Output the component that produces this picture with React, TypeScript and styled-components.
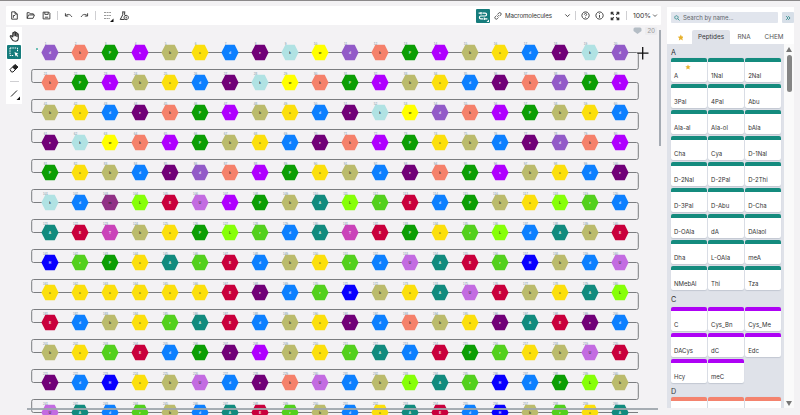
import React from 'react';
import styled, { createGlobalStyle } from 'styled-components';

const Global = createGlobalStyle`
  * { box-sizing: border-box; }
  body { margin: 0; background: #f3f2f4; overflow: hidden; }
  svg { display: block; }
`;

const Page = styled.div`
  width: 800px;
  height: 415px;
  overflow: hidden;
  display: grid;
  grid-template-columns: 661px 127px;
  column-gap: 6px;
  background: #f3f2f4;
  border-top: 1px solid #8b898a;
  font-family: Inter, 'Liberation Sans', sans-serif;
  color: #333;
`;

const Workspace = styled.main`
  display: flex;
  flex-direction: column;
  height: 414px;
`;

const TopBar = styled.header`
  margin: 5px 0 0 6px;
  height: 19px;
  flex: none;
  display: flex;
  align-items: center;
  background: #fff;
  border-radius: 1px;
`;

const Slot = styled.span<{ $w: number }>`
  width: ${(p) => p.$w}px;
  flex: none;
  display: flex;
  justify-content: center;
  align-items: center;
`;

const Divider = styled.i<{ $horizontal?: boolean }>`
  width: ${(p) => (p.$horizontal ? 9 : 1)}px;
  height: ${(p) => (p.$horizontal ? 1 : 9)}px;
  background: #cfcfd2;
`;

const Spacer = styled.div`
  flex: 1;
`;

const ModeButton = styled.button`
  width: 14px;
  height: 14px;
  padding: 0;
  border: 0;
  border-radius: 1px;
  background: #167c7c;
  display: flex;
  align-items: center;
  justify-content: center;
`;

const ModeName = styled.span`
  width: 57px;
  font-size: 6.2px;
  line-height: 10px;
  letter-spacing: -0.1px;
`;

const Zoom = styled.span`
  width: 19px;
  font-size: 6.8px;
  line-height: 10px;
`;

const Body = styled.div`
  display: flex;
  flex: 1;
  margin-top: 2px;
  min-height: 0;
`;

const ToolRail = styled.aside`
  width: 16px;
  height: 77px;
  margin-left: 6px;
  flex: none;
  background: #fff;
  display: flex;
  flex-direction: column;
  align-items: center;
`;

const Tool = styled.span<{ $h: number; $active?: boolean }>`
  width: 14px;
  height: ${(p) => p.$h}px;
  flex: none;
  display: flex;
  align-items: center;
  justify-content: center;
  border-radius: 1px;
  background: ${(p) => (p.$active ? '#167c7c' : 'transparent')};
`;

const Canvas = styled.svg`
  width: 639px;
  height: 388px;
  flex: none;
  font-family: 'Liberation Sans', sans-serif;
`;

const Library = styled.aside`
  margin-top: 6px;
  height: 401px;
  background: #fff;
  display: flex;
  flex-direction: column;
`;

const SearchRow = styled.div`
  margin: 5px 0 0 4px;
  height: 11px;
  flex: none;
  display: flex;
  justify-content: space-between;
`;

const SearchBox = styled.div`
  width: 107px;
  display: flex;
  align-items: center;
  gap: 3px;
  padding-left: 3px;
  border-radius: 1px;
  background: #e1e5ed;
  color: #62656b;
  font-size: 6px;
  letter-spacing: -0.03px;
  line-height: 11px;
`;

const Collapse = styled.div`
  width: 12px;
  display: flex;
  align-items: center;
  justify-content: center;
  border-radius: 1px;
  background: #d7dfe8;
`;

const Tabs = styled.nav`
  margin-top: 7px;
  height: 14px;
  flex: none;
  display: flex;
`;

const Tab = styled.span<{ $w: number; $active?: boolean }>`
  width: ${(p) => p.$w}px;
  display: flex;
  align-items: center;
  justify-content: center;
  font-size: 6.3px;
  border-radius: 2px 2px 0 0;
  color: ${(p) => (p.$active ? '#333' : '#555')};
  background: ${(p) => (p.$active ? '#dfe2e9' : 'transparent')};
`;

const Scroller = styled.div`
  flex: 1;
  min-height: 0;
  display: flex;
`;

const Monomers = styled.div`
  width: 117px;
  padding-left: 4px;
  overflow: hidden;
  background: #dfe2e9;
`;

const GroupTitle = styled.h3<{ $h: number }>`
  height: ${(p) => p.$h}px;
  margin: 0;
  padding-top: 2px;
  display: flex;
  align-items: center;
  font-size: 7.2px;
  font-weight: 400;
`;

const CardGrid = styled.div`
  display: grid;
  grid-template-columns: repeat(3, 35.5px);
  grid-auto-rows: 24px;
  gap: 2px 1.6px;
`;

const Card = styled.div<{ $color: string }>`
  position: relative;
  padding: 10px 0 0 3px;
  background: #fff;
  border-top: 4px solid ${(p) => p.$color};
  border-radius: 2px;
  font-size: 6px;
  line-height: 8.6px;
  white-space: nowrap;
  box-shadow: 0 0.5px 1px #c3c8d2;
`;

const Favourite = styled.svg`
  position: absolute;
  top: 2px;
  left: 14px;
`;

const ScrollTrack = styled.div`
  width: 10px;
  display: flex;
  flex-direction: column;
  align-items: center;
  background: #fafafa;
`;

const ScrollThumb = styled.i`
  width: 5px;
  height: 37px;
  margin-top: 3px;
  border-radius: 3px;
  background: #858585;
`;

const Arrow = styled.i<{ $up?: boolean }>`
  margin-top: ${(p) => (p.$up ? 3 : 0)}px;
  margin-bottom: ${(p) => (p.$up ? 0 : 2)}px;
  border: 3px solid transparent;
  border-top: ${(p) => (p.$up ? '0' : '5px solid #777')};
  border-bottom: ${(p) => (p.$up ? '5px solid #777' : '0')};
`;

const icons = {
  file: 'M9 1.5H3v13h10V5.5L9 1.5v4h4M6 8v4M6 8h3',
  open: 'M2 13V3h4l1.5 2H13v2M2 13l2.5-6H15l-2.5 6z',
  save: 'M2 2h10l2 2v10H2zM5 2v4h6V2M5 11h6',
  undo: 'M2.5 4v5h5M2.8 8.5C5.5 5 11 5 14 10.5',
  redo: 'M13.5 4v5h-5M13.2 8.5C10.5 5 5 5 2 10.5',
  flask: 'M5 1.5h5M6 2v4L2 13.5h7M9 2v4l1.5 2M11.5 7a3.4 3.4 0 1 0 .1 0M11.5 9v3',
  link: 'M6.5 9.5l3-3M7 5l2.5-3a2.7 2.7 0 0 1 4 4L11 8.5M5 7L2.5 9.5a2.8 2.8 0 0 0 4 4L9 11',
  help: 'M8 1.5a6.5 6.5 0 1 0 .1 0M6 6.3c0-2.8 4-2.6 4-.2 0 1.5-2 1.6-2 3.1M8 11v1.2',
  info: 'M8 1.5a6.5 6.5 0 1 0 .1 0M8 7v5M8 4v1.4',
  full: 'M6 6L2 2m0 3.500V2h3.500M10 6l4-4m-3.500 0h3.500v3.500M6 10l-4 4m0-3.500v3.500h3.500M10 10l4 4m-3.500 0h3.500v-3.500',
  down: 'M3 5.5l5 5 5-5',
  hand: 'M5.5 9V3.5c0-1.6 2-1.6 2 0V7 2.2c0-1.6 2-1.6 2 0V7 3.2c0-1.5 2-1.5 2 0V8 5.2c0-1.4 2-1.4 2 0v5C13.5 13 12 15 9 15c-3 0-4-1.500-5-3.500L2 8.300c-.7-1.400 1-2 1.700-1L5.500 9',
  search: 'M6.500 2a4.500 4.500 0 1 0 .1 0M10 10l4.500 4.500',
  collapse: 'M3 3l5 5-5 5M8.500 3l5 5-5 5',
  snake: 'M1 3.500h4M7 3.500h4.500c3 0 3 4.500 0 4.500H4.500C1.500 8 1.500 12.500 4.500 12.500H8M10 12.500h5M5 1.500v4M10 10.500v4',
};

interface IconProps {
  name: keyof typeof icons;
  size?: number;
  color?: string;
  weight?: number;
}

function Icon({ name, size = 9, color = '#333', weight = 1.6 }: IconProps) {
  return (
    <svg width={size} height={size} viewBox="0 0 16 16" fill="none" stroke={color} strokeWidth={weight} strokeLinejoin="round">
      <path d={icons[name]} />
    </svg>
  );
}

const STAR = 'M8 1l2.100 4.700 5 .5-3.700 3.400 1.100 5L8 12l-4.500 2.600 1.100-5L.9 6.200l5-.5z';

const residues: Record<string, [color: string, letter: string, ink: string]> = {
  P: ['#925bc8', 'd', '#fff'],
  S: ['#f5816b', 'k', '#222'],
  G: ['#0b9e04', 'F', '#fff'],
  V: ['#b000ff', 's', '#fff'],
  K: ['#bbbb6c', 'b', '#222'],
  Y: ['#fbdf0c', 'c', '#555'],
  B: ['#0d80ff', 'd', '#fff'],
  U: ['#710078', 'e', '#fff'],
  C: ['#b0e2e3', 'k', '#222'],
  L: ['#ffff00', 'w', '#222'],
  M: ['#913186', 'm', '#222'],
  H: ['#87ff08', 'L', '#333'],
  R: ['#c9003c', 'E', '#fff'],
  O: ['#c36be1', 'U', '#333'],
  T: ['#128b7e', 'A', '#fff'],
  E: ['#54d01e', 'r', '#fff'],
  N: ['#ca43b9', 'T', '#fff'],
  I: ['#0900ff', 'H', '#fff'],
};

const chain = [
  'PSGVKYBUCLPSGVKYBUCP',
  'SGVKYBUCLSGVKYBUSPGV',
  'KYBUSGVKYBUCLPSVGKYB',
  'UCLSVGKYBUSVGYKBUPSV',
  'GYKBUPSVGYKBUSGVKYBU',
  'CBMHROVGKTHERBGKYHEB',
  'TRNKYGHEBTNRGYEHBTKR',
  'IEGYTERBKYEBOTREIKBO',
  'YYYYYYRUBEIKYTORKYTH',
  'RBKYETRBKYUBSKYUTRUB',
  'KYERBGUVKYETBRGEYKOR',
  'UBIYKOBUSOBKHTEIBGHK',
  'OTBEKBTREKBYTRBIKEYT',
];

function Sequence() {
  return (
    <Canvas viewBox="22 27 639 388">
      {chain.map((row, r) => {
        const y = 52.5 + r * 30;
        return (
          <g key={r}>
            <path
              d={
                r < chain.length - 1
                  ? `M50 ${y}H636.500q1.800 0 1.800 1.800V${y + 15.200}q0 1.800-1.800 1.800H33.500q-1.800 0-1.800 1.800V${y + 28.200}q0 1.800 1.800 1.800H50`
                  : `M50 ${y}H638`
              }
              fill="none"
              stroke="#7b7d80"
              strokeWidth="1"
            />
            {row.split('').map((code, c) => {
              const x = 50 + c * 30;
              const [color, letter, ink] = residues[code];
              return (
                <g key={c}>
                  <path d={`M${x - 8.600} ${y}l3.900-7.800h9.400l3.900 7.800-3.900 7.800h-9.400z`} fill={color} />
                  <text x={x} y={y + 1.1} fontSize="3.300" fontWeight="700" textAnchor="middle" fill={ink} opacity=".85">{letter}</text>
                  <text x={x - 4.500} y={y - 8} fontSize="3" textAnchor="middle" fill="#5f8296" opacity=".85">{r * 20 + c + 1}</text>
                </g>
              );
            })}
          </g>
        );
      })}
      <rect x="36" y="48" width="2" height="2" fill="#6cc0b5" />
      <rect x="645" y="27" width="12" height="8" rx="1" fill="#ececef" />
      <path d="M633.500 29q0-1.500 1.500-1.500h5q1.500 0 1.500 1.500v2l-4 3-4-3z" fill="#b4bdc5" />
      <text x="651.200" y="33.200" fontSize="6.500" textAnchor="middle" fill="#999">20</text>
      <path d="M637.500 53.200h11M642.700 47v12.500" stroke="#111" strokeWidth="1.300" />
      <rect x="659" y="30" width="2" height="116" fill="#a5abb3" />
      <rect x="27" y="408" width="631" height="2" fill="#9da5ac" opacity=".9" />
    </Canvas>
  );
}

const groups = [
  {
    title: 'A', color: '#148b7e', height: 14,
    items: ['A', '1Nal', '2Nal', '3Pal', '4Pal', 'Abu', 'Ala-al', 'Ala-ol', 'bAla', 'Cha', 'Cya', 'D-1Nal', 'D-2Nal', 'D-2Pal', 'D-2Thi', 'D-3Pal', 'D-Abu', 'D-Cha', 'D-OAla', 'dA', 'DAlaol', 'Dha', 'L-OAla', 'meA', 'NMebAl', 'Thi', 'Tza'],
  },
  { title: 'C', color: '#ae02f5', height: 17, items: ['C', 'Cys_Bn', 'Cys_Me', 'DACys', 'dC', 'Edc', 'Hcy', 'meC'] },
  { title: 'D', color: '#f4836e', height: 14, items: ['', '', ''] },
];

export default function App() {
  return (
    <Page>
      <Global />
      <Workspace>
        <TopBar>
          <Slot $w={16}><Icon name="file" /></Slot>
          <Slot $w={16}><Icon name="open" /></Slot>
          <Slot $w={16}><Icon name="save" /></Slot>
          <Slot $w={6}><Divider /></Slot>
          <Slot $w={16}><Icon name="undo" /></Slot>
          <Slot $w={16}><Icon name="redo" /></Slot>
          <Slot $w={7}><Divider /></Slot>
          <Slot $w={18}>
            <svg width="11" height="12" viewBox="0 0 11 12">
              <path d="M1 2.500h7M1 5.500h7M1 8.500h6" stroke="#999" strokeDasharray="2 .6" />
              <path d="M10.500 8.500V12H7z" fill="#111" />
            </svg>
          </Slot>
          <Slot $w={13}><Icon name="flask" size={10} /></Slot>
          <Spacer />
          <ModeButton aria-label="Layout mode">
            <svg width="14" height="14" viewBox="0 0 14 14">
              <g transform="translate(2 2) scale(.625)" fill="none" stroke="#fff" strokeWidth="1.900"><path d={icons.snake} /></g>
              <path d="M13 10.500V13h-2.500z" fill="#fff" />
            </svg>
          </ModeButton>
          <Slot $w={15}><Icon name="link" size={8} /></Slot>
          <ModeName>Macromolecules</ModeName>
          <Slot $w={10}><Icon name="down" size={7} weight={2} /></Slot>
          <Slot $w={7}><Divider /></Slot>
          <Slot $w={13}><Icon name="help" /></Slot>
          <Slot $w={15}><Icon name="info" /></Slot>
          <Slot $w={15}><Icon name="full" size={10} weight={1.9} /></Slot>
          <Slot $w={9}><Divider /></Slot>
          <Slot $w={2} />
          <Zoom>100%</Zoom>
          <Slot $w={6}><Icon name="down" size={7} weight={2} /></Slot>
          <Slot $w={3} />
        </TopBar>
        <Body>
          <ToolRail>
            <Tool $h={18}><Icon name="hand" size={11} /></Tool>
            <Tool $h={14} $active>
              <svg width="10" height="10" viewBox="0 0 10 10">
                <path d="M1 1h7.500v4M1 1v7.500h4" fill="none" stroke="#fff" strokeDasharray="1.500 .8" />
                <path d="M5.500 5l4 1.800-1.700.6 1.500 1.500-.8.800-1.500-1.500-.5 1.400z" fill="#fff" />
              </svg>
            </Tool>
            <Tool $h={18}>
              <svg width="10" height="10" viewBox="0 0 10 10">
                <path d="M1 6.500L6 1.500l3 2.500-5 5H2.500z" fill="none" stroke="#222" />
                <path d="M3.200 4.200L6 1.500l3 2.500-2.800 3z" fill="#222" />
              </svg>
            </Tool>
            <Tool $h={8}><Divider $horizontal /></Tool>
            <Tool $h={17}>
              <svg width="14" height="14" viewBox="0 0 14 14">
                <path d="M4 9.500l6-6" stroke="#222" />
                <path d="M13 9.500v3.500H9.500z" fill="#111" />
              </svg>
            </Tool>
          </ToolRail>
          <Sequence />
        </Body>
      </Workspace>
      <Library>
        <SearchRow>
          <SearchBox><Icon name="search" size={6} color="#167c7c" weight={2} />Search by name...</SearchBox>
          <Collapse><Icon name="collapse" size={6} color="#167c7c" weight={2} /></Collapse>
        </SearchRow>
        <Tabs>
          <Tab $w={25}>
            <svg width="7" height="7" viewBox="0 0 16 16"><path d={STAR} fill="#e7b12c" transform="translate(3)" /></svg>
          </Tab>
          <Tab $w={38} $active>Peptides</Tab>
          <Tab $w={28}>RNA</Tab>
          <Tab $w={32}>CHEM</Tab>
        </Tabs>
        <Scroller>
          <Monomers>
            {groups.map((group) => (
              <section key={group.title}>
                <GroupTitle $h={group.height}>{group.title}</GroupTitle>
                <CardGrid>
                  {group.items.map((item, i) => (
                    <Card key={i} $color={group.color}>
                      {item}
                      {item === 'A' && (
                        <Favourite width="6" height="6" viewBox="0 0 16 16"><path d={STAR} fill="#e7b12c" /></Favourite>
                      )}
                    </Card>
                  ))}
                </CardGrid>
              </section>
            ))}
          </Monomers>
          <ScrollTrack>
            <Arrow $up />
            <ScrollThumb />
            <Spacer />
            <Arrow />
          </ScrollTrack>
        </Scroller>
      </Library>
    </Page>
  );
}
